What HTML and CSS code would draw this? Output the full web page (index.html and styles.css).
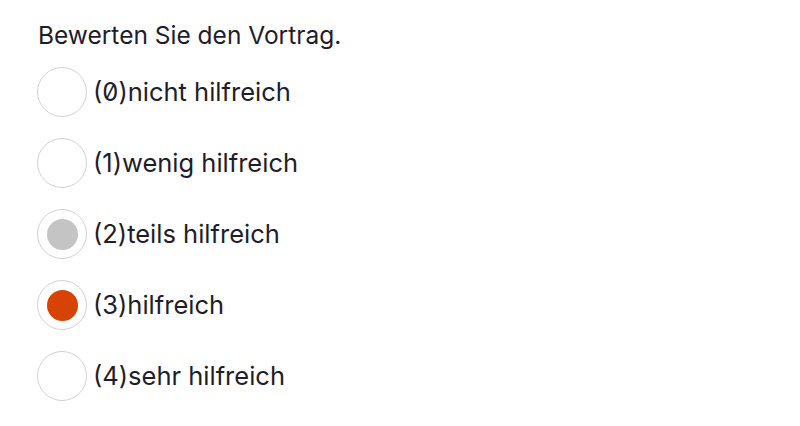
FILE: index.html
```html
<!DOCTYPE html>
<html lang="de">
<head>
<meta charset="utf-8">
<link rel="stylesheet" href="styles.css">
</head>
<body>
<div class="question">
  <div class="title">Bewerten Sie den Vortrag.</div>
  <div class="options">
    <label class="option"><span class="radio"></span><span class="label">(0)nicht hilfreich</span></label>
    <label class="option"><span class="radio"></span><span class="label">(1)wenig hilfreich</span></label>
    <label class="option"><span class="radio hover"></span><span class="label">(2)teils hilfreich</span></label>
    <label class="option"><span class="radio checked"></span><span class="label">(3)hilfreich</span></label>
    <label class="option"><span class="radio"></span><span class="label">(4)sehr hilfreich</span></label>
  </div>
</div>
</body>
</html>
```

FILE: styles.css
```css
html, body {
  margin: 0;
  padding: 0;
  background: #ffffff;
}
body {
  font-family: Inter, "Noto Sans", sans-serif;
  color: #1f1d2b;
  font-feature-settings: "zero" 1;
}
.question {
  padding: 20px 0 0 37px;
}
.title {
  font-size: 24.5px;
  line-height: 30px;
  padding-left: 1px;
}
.options {
  display: flex;
  flex-direction: column;
  gap: 21px;
  margin-top: 17px;
}
.option {
  display: flex;
  align-items: center;
  gap: 6px;
  height: 50px;
}
.radio {
  width: 48px;
  height: 48px;
  border: 1px solid #d2d2d2;
  border-radius: 50%;
  display: flex;
  align-items: center;
  justify-content: center;
  box-sizing: content-box;
  flex: none;
}
.radio.hover::after,
.radio.checked::after {
  content: "";
  width: 31px;
  height: 31px;
  border-radius: 50%;
  background: #c4c4c4;
}
.radio.checked::after {
  background: #d64304;
}
.label {
  font-size: 25.5px;
  line-height: 30px;
}
```
